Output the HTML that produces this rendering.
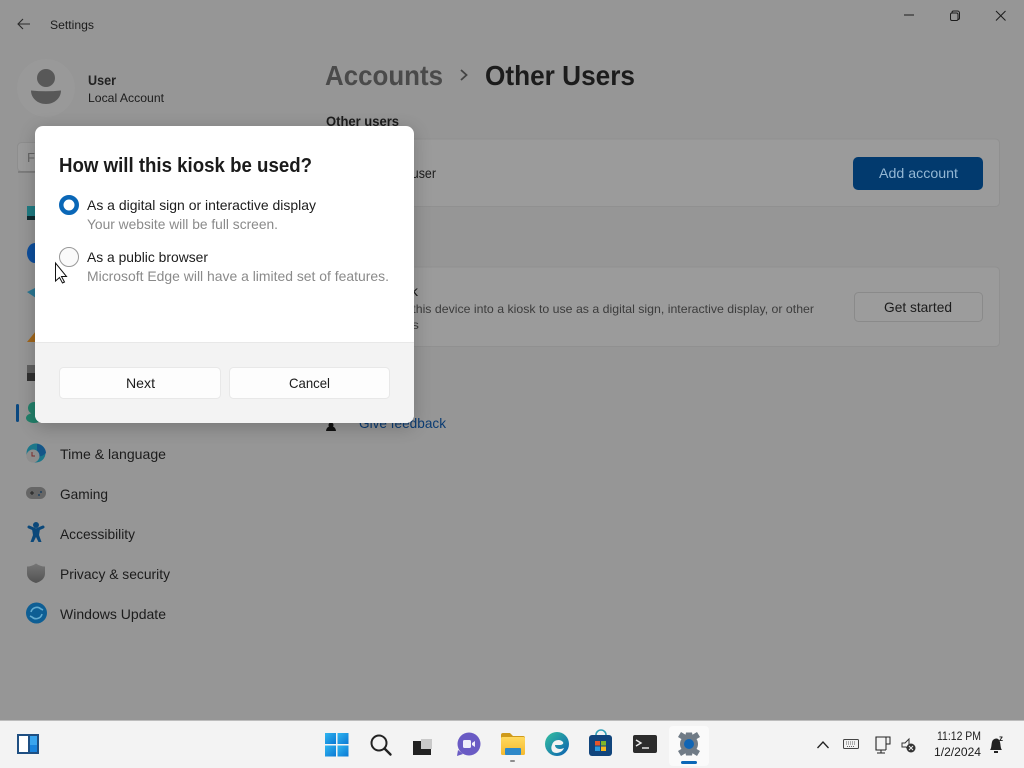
<!DOCTYPE html>
<html lang="en"><head><meta charset="utf-8"><title>Settings</title>
<style>
html,body{margin:0;padding:0;width:1024px;height:768px;overflow:hidden;background:#969696}
svg{display:block;position:absolute;left:0;top:0;font-family:"Liberation Sans",sans-serif}
</style></head><body>
<svg width="1024" height="768" viewBox="0 0 1024 768" xmlns="http://www.w3.org/2000/svg" fill="#1c1c1c">
<defs>
<filter id="sh" x="-20%" y="-20%" width="140%" height="140%"><feGaussianBlur stdDeviation="9"/></filter>
<linearGradient id="fold" x1="0" y1="0" x2="0" y2="1"><stop offset="0" stop-color="#ffd95e"/><stop offset="1" stop-color="#f5b92e"/></linearGradient>
<linearGradient id="edge" x1="0" y1="0" x2="1" y2="1"><stop offset="0" stop-color="#35c1a0"/><stop offset="1" stop-color="#0c5fb0"/></linearGradient>
<linearGradient id="win" x1="0" y1="0" x2="1" y2="1"><stop offset="0" stop-color="#30b6f0"/><stop offset="1" stop-color="#0a78d4"/></linearGradient>
<linearGradient id="shield" x1="0" y1="0" x2="0" y2="1"><stop offset="0" stop-color="#767676"/><stop offset="1" stop-color="#525252"/></linearGradient>
</defs>
<rect width="1024" height="768" fill="#969696"/>

<!-- title bar -->
<path d="M30 24H18M23 19l-5 5 5 5" fill="none" stroke="#2a2a2a" stroke-width="1.100"/>
<text x="50" y="29" font-size="12" textLength="44" lengthAdjust="spacingAndGlyphs">Settings</text>
<path d="M904 15h10" stroke="#1c1c1c" stroke-width="1"/>
<path d="M952 13v-0.500a1.500 1.500 0 0 1 1.500-1.500h4a2 2 0 0 1 2 2v5a1.500 1.500 0 0 1-1.500 1.500" fill="none" stroke="#1c1c1c"/>
<rect x="950.500" y="13" width="7.500" height="7.500" rx="1.500" fill="none" stroke="#1c1c1c"/>
<path d="M996 11l9.500 9.500M1005.500 11l-9.500 9.500" stroke="#1c1c1c" stroke-width="1"/>

<!-- profile -->
<circle cx="46" cy="88" r="29" fill="#999"/>
<circle cx="46" cy="78" r="9" fill="#585858"/>
<path d="M31 90.500q15 1.500 30 0c0 7-6 13.500-15 13.500s-15-6.500-15-13.500z" fill="#585858"/>
<text x="88" y="85" font-size="14" font-weight="700" fill="#222" textLength="28" lengthAdjust="spacingAndGlyphs">User</text>
<text x="88" y="102" font-size="12" textLength="76" lengthAdjust="spacingAndGlyphs">Local Account</text>

<!-- search box remnant -->
<rect x="17.500" y="142.500" width="40" height="29" rx="4" fill="#9b9b9b" stroke="#8e8e8e"/>
<path d="M18 172h30" stroke="#686868"/>
<text x="27" y="162" font-size="13" fill="#646464">F</text>

<!-- partially hidden nav icons -->
<rect x="27" y="206" width="12" height="14" fill="#207c83"/><rect x="27" y="216" width="12" height="4" fill="#102a30"/>
<ellipse cx="35" cy="253" rx="8" ry="10" fill="#0d4e9c"/>
<path d="M27 292l12-6v14z" fill="#2b7793"/>
<path d="M27 342l9-11v11z" fill="#a2671b"/>
<rect x="27" y="365" width="12" height="8" fill="#606060"/><rect x="27" y="373" width="12" height="8" fill="#303030"/>
<rect x="16" y="404" width="3" height="18" rx="1.500" fill="#0a4880"/>
<circle cx="34" cy="408" r="6" fill="#22806a"/><ellipse cx="34" cy="418" rx="8" ry="5" fill="#22806a"/>

<!-- nav -->
<circle cx="36" cy="453" r="9.500" fill="#1c778a"/>
<path d="M37 444a9.500 9.500 0 0 1 9 9c-3 3-6 4-9 3z" fill="#145588"/>
<circle cx="33" cy="456" r="6.500" fill="#8d8d8d"/>
<path d="M32 452v4h3" fill="none" stroke="#7a2a2a"/>
<text x="60" y="459" font-size="14" textLength="106" lengthAdjust="spacingAndGlyphs">Time &amp; language</text>
<rect x="26" y="487" width="20" height="12" rx="6" fill="#666"/>
<path d="M30 493h4M32 491v4" stroke="#222"/><circle cx="41" cy="492" r="1" fill="#23425f"/><circle cx="39" cy="495" r="1" fill="#23425f"/>
<text x="60" y="499" font-size="14" textLength="48" lengthAdjust="spacingAndGlyphs">Gaming</text>
<circle cx="36" cy="525" r="3" fill="#0b487a"/>
<path d="M29 527l7 3 7-3" fill="none" stroke="#0b487a" stroke-width="3" stroke-linecap="round"/>
<path d="M32 529h8l-1 6 2.500 7h-3l-2.500-5-2.500 5h-3l2.500-7z" fill="#0b487a"/>
<text x="60" y="539" font-size="14" textLength="75" lengthAdjust="spacingAndGlyphs">Accessibility</text>
<path d="M36 563.500c3 2 6 3 9 3v7c0 5-4 8-9 9.500-5-1.500-9-4.500-9-9.500v-7c3 0 6-1 9-3z" fill="url(#shield)"/>
<text x="60" y="579" font-size="14" textLength="110" lengthAdjust="spacingAndGlyphs">Privacy &amp; security</text>
<circle cx="36.500" cy="613" r="10.500" fill="#0e5e94"/>
<path d="M31 612a6 6 0 0 1 10-3l2 1M42 614a6 6 0 0 1-10 3l-2-1" fill="none" stroke="#62aacf" stroke-width="1.600"/>
<text x="60" y="619" font-size="14" textLength="106" lengthAdjust="spacingAndGlyphs">Windows Update</text>

<!-- main header -->
<text x="325" y="85" font-size="28" font-weight="700" fill="#4a4a4a" textLength="118" lengthAdjust="spacingAndGlyphs">Accounts</text>
<path d="M461 70l5.500 5-5.500 5" fill="none" stroke="#444" stroke-width="1.800"/>
<text x="485" y="85" font-size="28" font-weight="700" textLength="150" lengthAdjust="spacingAndGlyphs">Other Users</text>
<text x="326" y="126" font-size="14" font-weight="700" textLength="73" lengthAdjust="spacingAndGlyphs">Other users</text>

<!-- cards -->
<rect x="326.500" y="139" width="673" height="67.500" rx="4" fill="#9b9b9b" stroke="#909090"/>
<text x="380" y="178" font-size="14" textLength="56" lengthAdjust="spacingAndGlyphs">other user</text>
<rect x="853" y="157" width="130" height="33" rx="5" fill="#023a6e"/>
<text x="879" y="178" font-size="14" fill="#94b7d4" textLength="79" lengthAdjust="spacingAndGlyphs">Add account</text>

<rect x="326.500" y="267" width="673" height="79.500" rx="4" fill="#9b9b9b" stroke="#909090"/>
<text x="380" y="296" font-size="14" textLength="38" lengthAdjust="spacingAndGlyphs">Kiosk</text>
<text x="384" y="313" font-size="12" fill="#3c3c3c" textLength="430" lengthAdjust="spacingAndGlyphs">Turn this device into a kiosk to use as a digital sign, interactive display, or other</text>
<text x="380" y="329" font-size="12" fill="#3c3c3c" textLength="39" lengthAdjust="spacingAndGlyphs">things</text>
<rect x="854.500" y="292.500" width="128" height="29" rx="4" fill="#9c9c9c" stroke="#8a8a8a"/>
<text x="884" y="312" font-size="14" textLength="68" lengthAdjust="spacingAndGlyphs">Get started</text>

<path d="M326 431a5 5 0 0 1 10 0z" fill="#111"/><circle cx="331" cy="425" r="2.500" fill="#111"/>
<text x="359" y="428" font-size="14" fill="#0b3c73" textLength="87" lengthAdjust="spacingAndGlyphs">Give feedback</text>

<!-- dialog -->
<rect x="35" y="130" width="379" height="297" rx="8" fill="#000" opacity=".22" filter="url(#sh)"/>
<path d="M43 126h363a8 8 0 0 1 8 8v281a8 8 0 0 1-8 8H43a8 8 0 0 1-8-8V134a8 8 0 0 1 8-8z" fill="#ffffff"/>
<path d="M35 343h379v72a8 8 0 0 1-8 8H43a8 8 0 0 1-8-8z" fill="#f3f3f3"/>
<path d="M35 342.500h379" stroke="#e8e8e8"/>
<text x="59" y="172" font-size="20" font-weight="700" fill="#1b1b1b" textLength="253" lengthAdjust="spacingAndGlyphs">How will this kiosk be used?</text>
<circle cx="69" cy="205" r="7.750" fill="#fff" stroke="#0a67b7" stroke-width="4.500"/>
<text x="87" y="210" font-size="14" textLength="229" lengthAdjust="spacingAndGlyphs">As a digital sign or interactive display</text>
<text x="87" y="229" font-size="14" fill="#8a8a8a" textLength="191" lengthAdjust="spacingAndGlyphs">Your website will be full screen.</text>
<circle cx="69" cy="257" r="9.500" fill="#fafafa" stroke="#999" stroke-width="1"/>
<text x="87" y="262" font-size="14" textLength="121" lengthAdjust="spacingAndGlyphs">As a public browser</text>
<text x="87" y="281" font-size="14" fill="#8a8a8a" textLength="302" lengthAdjust="spacingAndGlyphs">Microsoft Edge will have a limited set of features.</text>
<rect x="59.500" y="367.500" width="161" height="31" rx="4" fill="#fdfdfd" stroke="#e8e8e8"/>
<text x="126" y="388" font-size="14" textLength="29" lengthAdjust="spacingAndGlyphs">Next</text>
<rect x="229.500" y="367.500" width="160" height="31" rx="4" fill="#fdfdfd" stroke="#e8e8e8"/>
<text x="289" y="388" font-size="14" textLength="41" lengthAdjust="spacingAndGlyphs">Cancel</text>

<!-- cursor -->
<path d="M55.500 263v18l4-3.500 3 5.500 2-1-3-5.500h5z" fill="#fff" stroke="#111" stroke-width="1"/>

<!-- taskbar -->
<rect y="721" width="1024" height="47" fill="#f3f3f3"/>
<path d="M0 720.500h1024" stroke="#bdbdbd"/>
<!-- widgets -->
<rect x="17" y="734" width="22" height="20" fill="#1f4f82"/>
<rect x="19" y="736" width="9" height="16" fill="#fff"/>
<rect x="30" y="736" width="7" height="16" fill="#3aa5ee"/>
<rect x="30" y="745" width="7" height="7" fill="#1983dc"/>
<!-- start -->
<rect x="325" y="733" width="11" height="11" fill="url(#win)"/>
<rect x="337.500" y="733" width="11" height="11" fill="url(#win)"/>
<rect x="325" y="745.500" width="11" height="11" fill="url(#win)"/>
<rect x="337.500" y="745.500" width="11" height="11" fill="url(#win)"/>
<!-- search -->
<circle cx="379" cy="743" r="7.500" fill="none" stroke="#222" stroke-width="2"/>
<path d="M384.500 748.500l6 6" stroke="#222" stroke-width="2.400" stroke-linecap="round"/>
<!-- task view -->
<rect x="413" y="741" width="18" height="14" fill="#222"/>
<rect x="421" y="739" width="11" height="10" fill="#c9c9c9"/>
<!-- chat -->
<circle cx="469" cy="744" r="11.500" fill="#6a5bc4"/>
<path d="M458 750l-1 6 6-2z" fill="#6a5bc4"/>
<rect x="463" y="740" width="8" height="8" rx="1.500" fill="#f0eefa"/>
<path d="M472 743l3-2v6l-3-2z" fill="#f0eefa"/>
<!-- explorer -->
<path d="M501 735a2 2 0 0 1 2-2h7l3 3h10a2 2 0 0 1 2 2v2h-24z" fill="#cf9a1b"/>
<rect x="501" y="737" width="24" height="18" rx="1.500" fill="url(#fold)"/>
<rect x="505" y="748" width="16" height="7" rx="1" fill="#2e88c8"/>
<rect x="510" y="760" width="5" height="2" rx="1" fill="#8d8d8d"/>
<!-- edge -->
<circle cx="557" cy="744" r="12" fill="url(#edge)"/>
<path d="M552 745a6.500 6.500 0 0 1 11-3c1 2-1 3-4 3h-4c0 4 5 5 9 3-2 5-8 6-11 4-2-2-2-5-1-7z" fill="#f3f3f3"/>
<!-- store -->
<path d="M596 735a5 5 0 0 1 10 0" fill="none" stroke="#33a0b8" stroke-width="1.600"/>
<rect x="589" y="735" width="23" height="21" rx="3" fill="#11457c"/>
<rect x="595" y="741" width="5" height="4.500" fill="#e5562a"/><rect x="601" y="741" width="5" height="4.500" fill="#7fb52b"/>
<rect x="595" y="746.500" width="5" height="4.500" fill="#2b9be0"/><rect x="601" y="746.500" width="5" height="4.500" fill="#f7b81e"/>
<!-- terminal -->
<rect x="633" y="735" width="24" height="18" rx="2" fill="#2c2c2c"/>
<path d="M636 740l5 3-5 3" fill="none" stroke="#eee" stroke-width="1.400"/>
<path d="M642 748h7" stroke="#eee" stroke-width="1.400"/>
<!-- settings active -->
<rect x="669" y="726" width="40" height="40" rx="4" fill="#fafafa"/>
<g fill="#707b86"><circle cx="689" cy="744" r="9"/>
<path d="M686 732.500h6l1 5h-8zM686 755.500h6l1-5h-8z"/>
<path d="M678 737l3-5 5 3-3 5zM700 737l-3-5-5 3 3 5zM678 751l3 5 5-3-3-5zM700 751l-3 5-5-3 3-5z"/></g>
<circle cx="689" cy="744" r="5" fill="#1065b5"/>
<rect x="681" y="761" width="16" height="3" rx="1.500" fill="#0a67b7"/>

<!-- tray -->
<path d="M817.500 748l5.500-6 5.500 6" fill="none" stroke="#222" stroke-width="1.300"/>
<rect x="843.500" y="739.500" width="15" height="9" rx="1" fill="none" stroke="#444"/>
<path d="M846 742h10M846 744h10M847 746.500h8" stroke="#666" stroke-dasharray="1 1"/>
<path d="M886 737h-10v13h10" fill="none" stroke="#222" stroke-width="1.100"/>
<path d="M886 744v6M881 750v3M877 753h8" fill="none" stroke="#222"/>
<rect x="886" y="737" width="4" height="7" fill="none" stroke="#222"/>
<path d="M902 743h3l4-4v11l-3-3h-4z" fill="none" stroke="#333"/>
<circle cx="911" cy="748" r="4.500" fill="#333"/>
<path d="M909 746l4 4M913 746l-4 4" stroke="#eee"/>
<text x="937" y="740" font-size="12" textLength="44" lengthAdjust="spacingAndGlyphs">11:12 PM</text>
<text x="934" y="756" font-size="12" textLength="47" lengthAdjust="spacingAndGlyphs">1/2/2024</text>
<path d="M990 750c2-2 1-8 3-10 2-2 5-2 6 0 2 2 1 8 3 10z" fill="#222"/>
<rect x="994" y="751" width="4" height="2" fill="#222"/>
<text x="999" y="741" font-size="8" font-weight="700">z</text>
</svg>
</body></html>
